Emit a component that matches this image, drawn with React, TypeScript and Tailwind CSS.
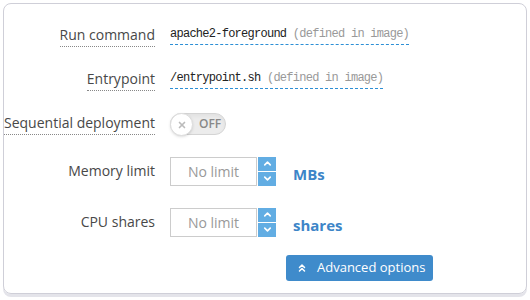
import { ChevronUp, ChevronDown, ChevronsUp, X } from "lucide-react";

const labelFont = { fontFamily: '"Open Sans", "Liberation Sans", sans-serif' };
const monoFont = { fontFamily: '"Liberation Mono", "DejaVu Sans Mono", monospace' };

function Label({ text, dotted }: { text: string; dotted?: boolean }) {
  return (
    <div className="flex w-[151px] shrink-0 justify-end">
      <span
        className={`whitespace-nowrap text-[14px] leading-[18px] text-[#484848] ${
          dotted ? "border-b border-dotted border-[#888] pb-[2px]" : ""
        }`}
      >
        {text}
      </span>
    </div>
  );
}

function Defined({ value }: { value: string }) {
  return (
    <span
      className="whitespace-nowrap border-b border-dashed border-[#2d8fd5] pb-[3px] text-[12px] leading-[14px] tracking-[-0.74px] text-[#222]"
      style={monoFont}
    >
      {value} <span className="text-[#999]">(defined in image)</span>
    </span>
  );
}

function NumberInput({ unit }: { unit: string }) {
  return (
    <div className="flex items-center">
      <div className="flex h-[29px] w-[87px] items-center justify-center border border-[#ccc] bg-white text-[14px] text-[#999]">
        No limit
      </div>
      <div className="ml-px flex h-[29px] w-[18px] flex-col gap-px">
        <div className="flex flex-1 items-center justify-center bg-[#62ade3]">
          <ChevronUp size={11} strokeWidth={3.5} color="#fff" />
        </div>
        <div className="flex flex-1 items-center justify-center bg-[#62ade3]">
          <ChevronDown size={11} strokeWidth={3.5} color="#fff" />
        </div>
      </div>
      <span className="ml-[17px] mt-[6px] text-[15px] font-bold text-[#3d85c8]">{unit}</span>
    </div>
  );
}

export default function App() {
  return (
    <div className="h-[300px] w-[530px] bg-white pl-[3px] pt-[3px]" style={labelFont}>
      <div className="h-[291px] w-[524px] rounded-[8px] border border-[#cfcfd8] pt-[10px] shadow-[0_3px_0_#e4e4ea]">
        <div className="flex h-[44px] items-center gap-[15px]">
          <Label text="Run command" dotted />
          <Defined value="apache2-foreground" />
        </div>
        <div className="flex h-[44px] items-center gap-[15px]">
          <Label text="Entrypoint" dotted />
          <Defined value="/entrypoint.sh" />
        </div>
        <div className="flex h-[44px] items-center gap-[15px]">
          <Label text="Sequential deployment" dotted />
          <div className="relative flex h-[22px] w-[56px] items-center rounded-full border border-[#d4d4d4] bg-[#ececec] shadow-inner">
            <div className="absolute -left-px -top-[1px] flex h-[23px] w-[23px] items-center justify-center rounded-full border border-[#ddd] bg-white shadow">
              <X size={10} strokeWidth={4} color="#bbb" />
            </div>
            <span className="ml-[28px] text-[12px] font-semibold text-[#888]">OFF</span>
          </div>
        </div>
        <div className="flex h-[50px] items-center gap-[15px]">
          <Label text="Memory limit" />
          <NumberInput unit="MBs" />
        </div>
        <div className="flex h-[52px] items-center gap-[15px]">
          <Label text="CPU shares" />
          <NumberInput unit="shares" />
        </div>
        <div className="flex h-[40px] items-center pl-[282px]">
          <button className="flex h-[26px] w-[147px] items-center rounded-[3px] bg-[#3f8bcb] pl-[10px] text-[13px] text-white">
            <ChevronsUp size={12} strokeWidth={3} color="#fff" />
            <span className="ml-[9px]">Advanced options</span>
          </button>
        </div>
      </div>
    </div>
  );
}
